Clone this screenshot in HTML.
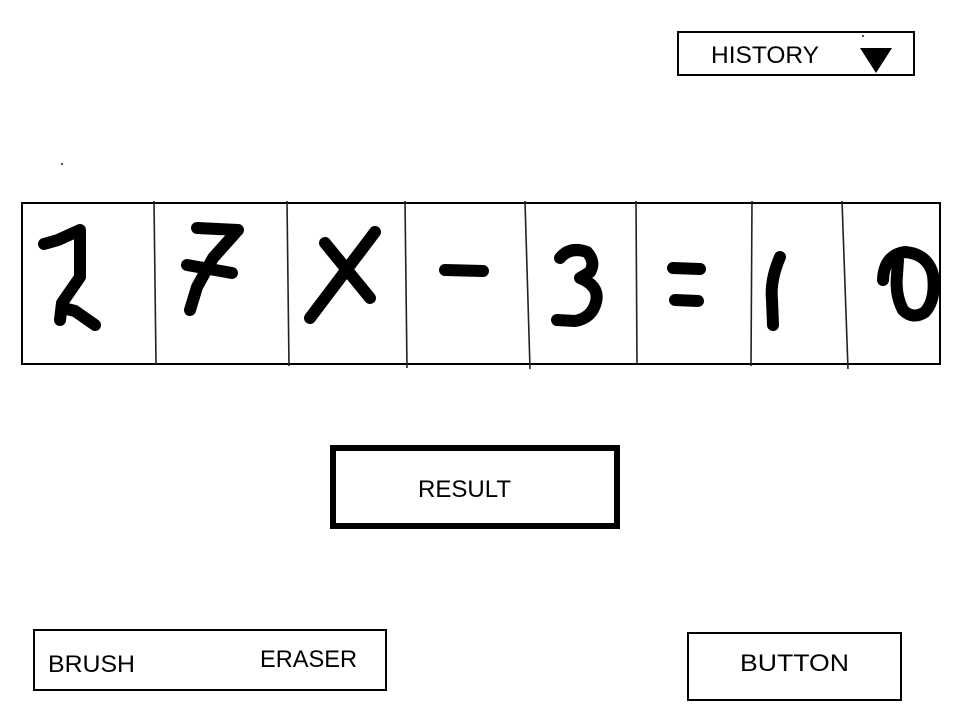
<!DOCTYPE html>
<html><head><meta charset="utf-8"><style>
html,body{margin:0;padding:0;background:#fff;width:958px;height:719px;overflow:hidden}
svg{display:block}
text{font-family:"Liberation Sans",sans-serif;font-size:24px;fill:#000}
</style></head><body>
<svg width="958" height="719" viewBox="0 0 958 719">
<rect x="678" y="32" width="236" height="43" fill="none" stroke="#000" stroke-width="2"/>
<text x="711" y="63" textLength="108" lengthAdjust="spacingAndGlyphs">HISTORY</text>
<polygon points="860,48 892,48 876,73" fill="#000"/>
<rect x="862" y="35" width="2" height="2" fill="#555"/>
<rect x="61" y="163" width="2" height="2" fill="#555"/>

<rect x="22" y="203" width="918" height="161" fill="none" stroke="#000" stroke-width="2"/>
<g stroke="#222" stroke-width="1.6">
<line x1="154" y1="201" x2="156" y2="364"/>
<line x1="287" y1="201" x2="289" y2="366"/>
<line x1="405" y1="201" x2="407" y2="368"/>
<line x1="525" y1="201" x2="530" y2="369"/>
<line x1="636" y1="201" x2="637" y2="364"/>
<line x1="752" y1="201" x2="751" y2="366"/>
<line x1="842" y1="201" x2="848" y2="369"/>
</g>
<g fill="none" stroke="#000" stroke-width="12" stroke-linecap="round" stroke-linejoin="round">
<path d="M44 244 L58 240 L80 230 L80 262 L80 277 L62 303 L60 320 M63 308 L75 311 L95 325"/>
<path d="M197 228 L238 230 L213 258 L197 287 L190 310 M187 265 L232 273"/>
<path d="M325 243 L370 298 M375 232 L310 318"/>
<path d="M445 270 L483 271"/>
<path d="M560 258 Q570 246 587 252 Q596 262 590 272 L580 278 Q600 286 596 302 Q592 318 575 321 L557 320"/>
<path d="M673 268 L700 269 M675 300 L698 301"/>
<path d="M780 257 Q770 280 772 300 L773 325"/>
<path d="M883 280 Q884 255 905 252 Q928 254 933 275 Q936 300 925 312 Q913 320 903 310 Q895 295 897 275 L898 260"/>
</g>

<rect x="333" y="448" width="284" height="78" fill="none" stroke="#000" stroke-width="6"/>
<text x="418" y="497" textLength="93" lengthAdjust="spacingAndGlyphs">RESULT</text>

<rect x="34" y="630" width="352" height="60" fill="none" stroke="#000" stroke-width="2"/>
<text x="48" y="672" textLength="87" lengthAdjust="spacingAndGlyphs">BRUSH</text>
<text x="260" y="667" textLength="97" lengthAdjust="spacingAndGlyphs">ERASER</text>

<rect x="688" y="633" width="213" height="67" fill="none" stroke="#000" stroke-width="2"/>
<text x="740" y="671" textLength="109" lengthAdjust="spacingAndGlyphs">BUTTON</text>
</svg>
</body></html>
